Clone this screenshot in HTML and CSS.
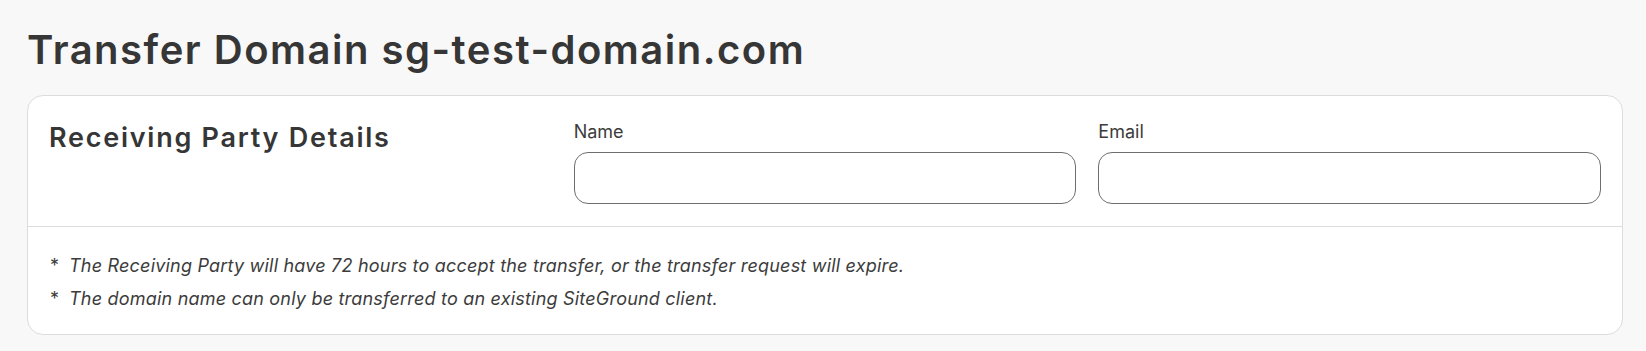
FILE: index.html
```html
<!DOCTYPE html>
<html lang="en">
<head>
    <meta charset="UTF-8"/>
    <title>Transfer Domain</title>
    <link rel="stylesheet" href="styles.css">
</head>
<body>
<h1 class="page-title">Transfer Domain sg-test-domain.com</h1>
<div class="card">
    <div class="card-top">
        <h2 class="card-title">Receiving Party Details</h2>
        <label class="field">
            <span class="field-label">Name</span>
            <input class="field-input" type="text" name="name"/>
        </label>
        <label class="field">
            <span class="field-label">Email</span>
            <input class="field-input" type="email" name="email"/>
        </label>
    </div>
    <div class="card-notes">
        <p class="note"><span class="star">*</span>The Receiving Party will have 72 hours to accept the transfer, or the transfer request will expire.</p>
        <p class="note"><span class="star">*</span>The domain name can only be transferred to an existing SiteGround client.</p>
    </div>
</div>
</body>
</html>
```

FILE: styles.css
```css
body {
    margin: 0;
    padding: 26px 23px 0 27px;
    background-color: #f8f8f8;
    font-family: Inter, "Liberation Sans", sans-serif;
    color: #363636;
}

.page-title {
    margin: 0 0 21px 0;
    font-size: 40px;
    line-height: 48px;
    font-weight: 600;
    letter-spacing: 1.5px;
    color: #363636;
}

.card {
    background-color: #fff;
    border: 1px solid #dcdcdc;
    border-radius: 16px;
}

.card-top {
    display: grid;
    grid-template-columns: repeat(3, 1fr);
    column-gap: 22px;
    padding: 24px 21px 22px 21px;
    border-bottom: 1px solid #dcdcdc;
}

.card-title {
    margin: 0;
    font-size: 27px;
    line-height: 36px;
    font-weight: 600;
    letter-spacing: 1.75px;
    color: #363636;
}

.field {
    display: flex;
    flex-direction: column;
    gap: 8px;
}

.field-label {
    font-size: 18px;
    line-height: 24px;
    color: #3c3c3c;
}

.field-input {
    height: 52px;
    box-sizing: border-box;
    border: 1px solid #6e6e6e;
    border-radius: 14px;
    background: #fff;
    font-family: inherit;
    font-size: 18px;
    padding: 0 14px;
}

.card-notes {
    padding: 22px 22px 19px 22px;
}

.note {
    margin: 0;
    font-size: 18px;
    line-height: 33px;
    font-style: italic;
    letter-spacing: 0.2px;
    color: #3c3c3c;
}

.star {
    font-style: normal;
    display: inline-block;
    width: 19px;
}
```
